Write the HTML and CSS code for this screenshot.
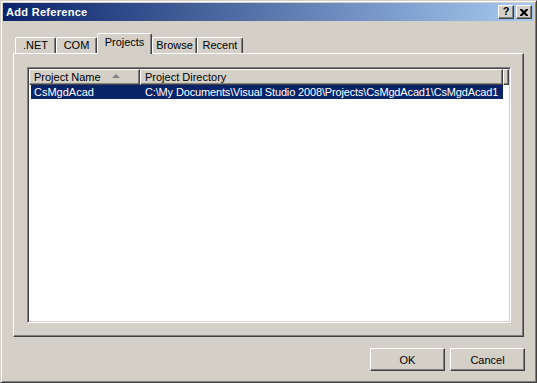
FILE: index.html
```html
<!DOCTYPE html>
<html lang="en">
<head>
    <meta charset="UTF-8">
    <title>Add Reference</title>
    <link rel="stylesheet" href="styles.css">
</head>
<body>
    <div class="window">
        <div class="titlebar">
            <span class="title">Add Reference</span>
            <div class="caption-buttons">
                <div class="caption-btn help">?</div>
                <div class="caption-btn close">
                    <svg width="8" height="7" viewBox="0 0 8 7">
                        <path d="M0 0h2l2 2 2-2h2v1l-2.5 2.5 2.5 2.5v1h-2l-2-2-2 2h-2v-1l2.5-2.5-2.5-2.5z" fill="#000"/>
                    </svg>
                </div>
            </div>
        </div>

        <div class="client">
            <div class="tabs">
                <div class="tab tab-net">.NET</div>
                <div class="tab tab-com">COM</div>
                <div class="tab tab-projects selected">Projects</div>
                <div class="tab tab-browse">Browse</div>
                <div class="tab tab-recent">Recent</div>
            </div>

            <div class="panel">
                <div class="listview">
                    <div class="header">
                        <div class="col col-name">Project Name <span class="sort-arrow"></span></div>
                        <div class="col col-dir">Project Directory</div>
                        <div class="col col-filler"></div>
                    </div>
                    <div class="rows">
                        <div class="row selected">
                            <span class="cell cell-name">CsMgdAcad</span>
                            <span class="cell cell-dir">C:\My Documents\Visual Studio 2008\Projects\CsMgdAcad1\CsMgdAcad1</span>
                        </div>
                    </div>
                </div>
            </div>

            <div class="actions">
                <div class="button">OK</div>
                <div class="button">Cancel</div>
            </div>
        </div>
    </div>
</body>
</html>
```

FILE: styles.css
```css
* {
    margin: 0;
    padding: 0;
    box-sizing: border-box;
}

body {
    font-family: "Liberation Sans", Arial, sans-serif;
    font-size: 11px;
    background: #D4D0C8;
    color: #000000;
}

.window {
    width: 537px;
    height: 383px;
    background: #D4D0C8;
    border: 1px solid;
    border-color: #D4D0C8 #404040 #404040 #D4D0C8;
    box-shadow: inset 1px 1px #FFFFFF, inset -1px -1px #808080;
    padding: 2px;
    display: flex;
    flex-direction: column;
}

/* Title bar */
.titlebar {
    height: 18px;
    background: linear-gradient(to right, #0A246A, #A6CAF0);
    display: flex;
    align-items: center;
    justify-content: space-between;
    padding: 0 2px 0 3px;
}

.title {
    color: #FFFFFF;
    font-weight: bold;
    font-size: 11px;
    letter-spacing: 0.3px;
}

.caption-buttons {
    display: flex;
    gap: 2px;
}

.caption-btn {
    width: 16px;
    height: 14px;
    background: #D4D0C8;
    border: 1px solid;
    border-color: #FFFFFF #404040 #404040 #FFFFFF;
    box-shadow: inset -1px -1px #808080;
    display: flex;
    align-items: center;
    justify-content: center;
    font-weight: bold;
    font-size: 11px;
    line-height: 1;
}

.caption-btn.help {
    padding-bottom: 1px;
}

/* Client area */
.client {
    flex: 1;
    display: flex;
    flex-direction: column;
    padding: 12px 10px 0 10px;
}

.tabs {
    display: flex;
    align-items: flex-end;
    height: 20px;
    padding-left: 2px;
}

.tab {
    height: 16px;
    border: 1px solid;
    border-bottom: none;
    border-color: #FFFFFF #404040 transparent #FFFFFF;
    border-radius: 2px 2px 0 0;
    box-shadow: inset -1px 0 #808080;
    display: flex;
    align-items: center;
    justify-content: center;
    padding-bottom: 1px;
    background: #D4D0C8;
}

.tab-net { width: 41px; }
.tab-com { width: 41px; }
.tab-projects { width: 55px; }
.tab-browse { width: 45px; }
.tab-recent { width: 46px; }

.tab.selected {
    height: 21px;
    margin-bottom: -1px;
    position: relative;
    z-index: 1;
    padding-bottom: 4px;
}

.panel {
    height: 284px;
    border: 1px solid;
    border-color: #FFFFFF #404040 #404040 #FFFFFF;
    box-shadow: inset -1px -1px #808080;
    padding: 13px 12px 13px 13px;
}

/* List view */
.listview {
    height: 256px;
    background: #FFFFFF;
    border: 1px solid;
    border-color: #808080 #FFFFFF #FFFFFF #808080;
    box-shadow: inset 1px 1px #404040, inset -1px -1px #D4D0C8;
    padding: 1px;
    display: flex;
    flex-direction: column;
}

.header {
    display: flex;
    height: 16px;
}

.col {
    height: 16px;
    flex-shrink: 0;
    background: #D4D0C8;
    border: 1px solid;
    border-color: #FFFFFF #404040 #404040 #FFFFFF;
    box-shadow: inset -1px -1px #808080;
    padding: 0 0 1px 4px;
    display: flex;
    align-items: center;
    white-space: nowrap;
}

.col-name { width: 111px; }
.col-dir { width: 363px; }
.col-filler {
    flex: 1;
    padding: 0;
}

.sort-arrow {
    width: 0;
    height: 0;
    margin-left: 11px;
    margin-top: -1px;
    border-left: 4px solid transparent;
    border-right: 4px solid transparent;
    border-bottom: 4px solid #808080;
}

.rows {
    padding: 0 0 0 2px;
}

.row {
    display: flex;
    width: 472px;
    height: 14px;
    align-items: center;
    white-space: nowrap;
    overflow: hidden;
}

.row.selected {
    background: #0A246A;
    color: #FFFFFF;
}

.cell {
    flex-shrink: 0;
}

.cell-name {
    width: 109px;
    padding-left: 3px;
}

.cell-dir {
    padding-left: 5px;
    letter-spacing: -0.15px;
}

/* Buttons */
.actions {
    display: flex;
    justify-content: flex-end;
    gap: 5px;
    margin-top: 11px;
    margin-right: -1px;
}

.button {
    width: 75px;
    height: 23px;
    background: #D4D0C8;
    border: 1px solid;
    border-color: #FFFFFF #404040 #404040 #FFFFFF;
    box-shadow: inset -1px -1px #808080;
    display: flex;
    align-items: center;
    justify-content: center;
}
```
